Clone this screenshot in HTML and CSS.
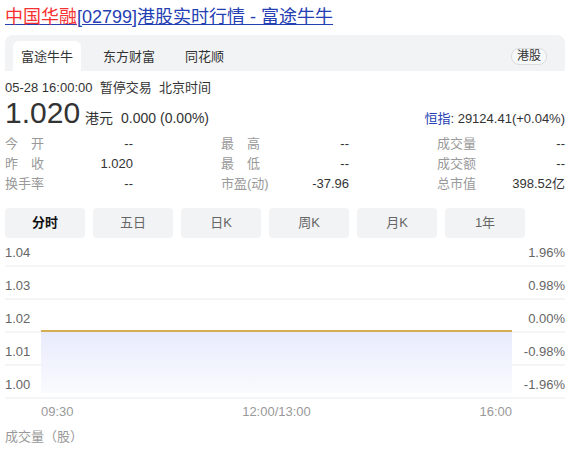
FILE: index.html
```html
<!DOCTYPE html>
<html lang="zh-CN">
<head>
<meta charset="utf-8">
<title>中国华融[02799]港股实时行情 - 富途牛牛</title>
<link rel="stylesheet" href="styles.css">
</head>
<body>
<div class="page">
  <h3 class="title"><a href="#"><em>中国华融</em>[02799]港股实时行情 - 富途牛牛</a></h3>
  <div class="tabs">
    <span class="tab active">富途牛牛</span>
    <span class="tab">东方财富</span>
    <span class="tab">同花顺</span>
    <span class="badge">港股</span>
  </div>
  <div class="status">05-28 16:00:00&nbsp;&nbsp;暂停交易&nbsp;&nbsp;北京时间</div>
  <div class="price-row">
    <span class="price">1.020</span>
    <span class="unit">港元</span>
    <span class="change">0.000 (0.00%)</span>
    <span class="index"><span class="index-name">恒指</span>: 29124.41(+0.04%)</span>
  </div>
  <div class="stats">
    <div class="cell"><span class="lbl">今&emsp;开</span><span class="val">--</span></div>
    <div class="cell"><span class="lbl">最&emsp;高</span><span class="val">--</span></div>
    <div class="cell"><span class="lbl">成交量</span><span class="val">--</span></div>
    <div class="cell"><span class="lbl">昨&emsp;收</span><span class="val">1.020</span></div>
    <div class="cell"><span class="lbl">最&emsp;低</span><span class="val">--</span></div>
    <div class="cell"><span class="lbl">成交额</span><span class="val">--</span></div>
    <div class="cell"><span class="lbl">换手率</span><span class="val">--</span></div>
    <div class="cell"><span class="lbl">市盈(动)</span><span class="val">-37.96</span></div>
    <div class="cell"><span class="lbl">总市值</span><span class="val">398.52亿</span></div>
  </div>
  <div class="periods">
    <span class="period current">分时</span>
    <span class="period">五日</span>
    <span class="period">日K</span>
    <span class="period">周K</span>
    <span class="period">月K</span>
    <span class="period">1年</span>
  </div>
  <div class="chart">
    <div class="grid-row first"><span>1.04</span><span>1.96%</span></div>
    <div class="grid-row"><span>1.03</span><span>0.98%</span></div>
    <div class="grid-row"><span>1.02</span><span>0.00%</span></div>
    <div class="grid-row"><span>1.01</span><span>-0.98%</span></div>
    <div class="grid-row"><span>1.00</span><span>-1.96%</span></div>
    <div class="plot">
      <div class="plot-line"></div>
      <div class="plot-fill"></div>
    </div>
  </div>
  <div class="xaxis"><span>09:30</span><span>12:00/13:00</span><span>16:00</span></div>
  <div class="vol-title">成交量（股）</div>
</div>
</body>
</html>
```
FILE: styles.css
```css
html, body {
  margin: 0;
  padding: 0;
  background: #fff;
}
body {
  font-family: "Liberation Sans", "Noto Sans CJK SC", sans-serif;
  font-size: 13px;
  color: #333;
}
.page {
  width: 560px;
  padding: 0 8px 0 5px;
}
.title {
  margin: 0;
  padding-top: 4px;
  font-size: 18px;
  font-weight: normal;
  line-height: 26px;
}
.title a {
  color: #2440b3;
  text-decoration: underline;
}
.title em {
  font-style: normal;
  color: #f73131;
}
.tabs {
  margin-top: 5px;
  height: 36px;
  background: #f2f3f5;
  border-radius: 8px 8px 0 0;
  display: flex;
  align-items: flex-end;
  padding-left: 8px;
  gap: 14px;
}
.tab {
  height: 30px;
  line-height: 31px;
  padding: 0 8px;
  color: #333;
  font-size: 13px;
}
.tab.active {
  background: #fff;
  border-radius: 6px 6px 0 0;
}
.badge {
  margin-left: auto;
  margin-right: 18px;
  align-self: center;
  margin-top: 6px;
  height: 15px;
  line-height: 15px;
  padding: 0 5px;
  border: 1px solid #dcdcdc;
  border-radius: 8px;
  font-size: 12px;
  color: #333;
  background: #f7f8fa;
}
.status {
  margin-top: 9px;
  line-height: 16px;
  font-size: 13px;
}
.price-row {
  display: flex;
  align-items: baseline;
  height: 34px;
  line-height: 34px;
}
.price {
  font-size: 30px;
  color: #333;
}
.unit {
  font-size: 14px;
  margin-left: 5px;
}
.change {
  font-size: 14px;
  margin-left: 8px;
}
.index {
  margin-left: auto;
  font-size: 13px;
}
.index-name {
  color: #2440b3;
}
.stats {
  margin-top: 4px;
  display: grid;
  grid-template-columns: 128px 128px 128px;
  column-gap: 88px;
}
.cell {
  display: flex;
  justify-content: space-between;
  line-height: 20px;
  font-size: 13px;
}
.lbl {
  color: #999;
}
.val {
  color: #333;
}
.periods {
  margin-top: 14px;
  display: flex;
  gap: 8px;
}
.period {
  width: 80px;
  height: 30px;
  line-height: 30px;
  text-align: center;
  background: #f2f3f5;
  border-radius: 4px;
  color: #666;
  font-size: 13px;
}
.period.current {
  color: #111;
  font-weight: bold;
}
.chart {
  position: relative;
}
.grid-row {
  border-bottom: 2px solid #f4f5f7;
  display: flex;
  justify-content: space-between;
  align-items: flex-end;
  padding-bottom: 4px;
  box-sizing: border-box;
  height: 33px;
  line-height: 16px;
  color: #666;
  font-size: 13px;
}
.grid-row.first {
  height: 29px;
}
.plot {
  position: absolute;
  left: 36px;
  top: 92px;
  width: 471px;
}
.plot-line {
  height: 2px;
  background: #d4ad53;
}
.plot-fill {
  height: 61px;
  background: linear-gradient(#e8ebfc, #fafbfe);
}
.xaxis {
  margin-top: 3px;
  padding-left: 36px;
  padding-right: 53px;
  display: flex;
  justify-content: space-between;
  line-height: 20px;
  color: #999;
  font-size: 13px;
}
.vol-title {
  margin-top: 5px;
  line-height: 20px;
  color: #999;
  font-size: 13px;
}
```
